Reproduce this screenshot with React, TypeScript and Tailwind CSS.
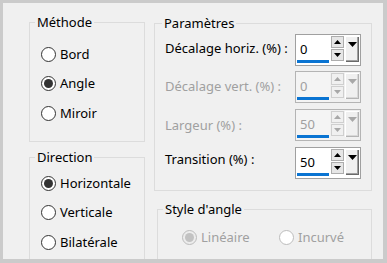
import React from "react";

function Tri({ up, color, w, h }: { up?: boolean; color: string; w: number; h: number }) {
  return (
    <svg width={w} height={h} viewBox={`0 0 ${w} ${h}`} className="block">
      {up ? (
        <polygon points={`0,${h} ${w},${h} ${w / 2},0`} fill={color} />
      ) : (
        <polygon points={`0,0 ${w},0 ${w / 2},${h}`} fill={color} />
      )}
    </svg>
  );
}

function Spinner({ value, disabled }: { value: string; disabled?: boolean }) {
  const tri = disabled ? "#a8a8a8" : "#000000";
  return (
    <div
      className={`w-[66px] h-[32px] shrink-0 border flex ${
        disabled ? "border-[#b4b4b4] bg-[#f0f0f0]" : "border-[#a0a0a0] bg-white"
      }`}
    >
      <div className={`w-[34px] h-full flex flex-col ${disabled ? "bg-[#f4f4f4]" : "bg-white"}`}>
        <div
          className={`flex-1 flex items-center pl-[4px] pt-[2px] leading-[16px] ${
            disabled ? "text-[#a0a0a0]" : "text-black"
          }`}
        >
          {value}
        </div>
        <div className="ml-[1px] w-[32px] h-[3px] bg-[#0a74d2] mb-[2px]" />
      </div>
      <div className="ml-[1px] w-[13px] pt-[1px] flex flex-col">
        <div
          className={`h-[12px] border flex items-center justify-center ${
            disabled ? "border-[#cfcfcf] bg-[#f0f0f0]" : "border-[#adadad] bg-[#e6e6e6]"
          }`}
        >
          <Tri up color={tri} w={7} h={4} />
        </div>
        <div
          className={`mt-[1px] h-[12px] border flex items-center justify-center ${
            disabled ? "border-[#cfcfcf] bg-[#f0f0f0]" : "border-[#adadad] bg-[#e6e6e6]"
          }`}
        >
          <Tri color={tri} w={7} h={4} />
        </div>
      </div>
      <div
        className={`ml-[1px] mt-[1px] w-[14px] h-[26px] bg-[#f0f0f0] flex justify-center pt-[6px] ${
          disabled
            ? "shadow-[inset_1px_1px_#ffffff,inset_-1px_-1px_#b4b4b4,inset_-2px_-2px_#d8d8d8]"
            : "shadow-[inset_1px_1px_#ffffff,inset_-1px_-1px_#696969,inset_-2px_-2px_#a0a0a0]"
        }`}
      >
        <Tri color={tri} w={9} h={5} />
      </div>
    </div>
  );
}

function Radio({
  label,
  checked,
  disabled,
  className,
}: {
  label: string;
  checked?: boolean;
  disabled?: boolean;
  className?: string;
}) {
  return (
    <div className={`flex items-center h-[16px] shrink-0 ${className ?? ""}`}>
      <span
        className={`w-[15px] h-[15px] rounded-full border flex items-center justify-center shrink-0 ${
          disabled
            ? checked
              ? "border-[#bcbcbc] bg-[#ececec]"
              : "border-[#bcbcbc] bg-white"
            : "border-[#333333] bg-white"
        }`}
      >
        {checked && (
          <span
            className={`w-[9px] h-[9px] rounded-full ${disabled ? "bg-[#c2c2c2]" : "bg-[#333333]"}`}
          />
        )}
      </span>
      <span className={`ml-[4px] leading-[16px] ${disabled ? "text-[#a0a0a0]" : "text-black"}`}>
        {label}
      </span>
    </div>
  );
}

function Title({ children, className }: { children: React.ReactNode; className: string }) {
  return (
    <div className={`-mt-[9px] px-[2px] bg-[#f0f0f0] w-fit leading-[16px] text-black shrink-0 ${className}`}>
      {children}
    </div>
  );
}

function Row({
  label,
  value,
  disabled,
  className,
  labelClass,
}: {
  label: string;
  value: string;
  disabled?: boolean;
  className: string;
  labelClass: string;
}) {
  return (
    <div className={`flex items-center h-[32px] shrink-0 pl-[10px] ${className}`}>
      <span
        className={`w-[130px] leading-[16px] ${disabled ? "text-[#a0a0a0]" : "text-black"} ${labelClass}`}
      >
        {label}
      </span>
      <Spinner value={value} disabled={disabled} />
    </div>
  );
}

export default function App() {
  return (
    <div className="w-[387px] h-[263px] bg-[#cbcbcb] pt-[3px] pl-[3px] pr-[4px] pb-[4px] font-['Noto_Sans',sans-serif] text-[13px]">
      <div className="h-full bg-[#f0f0f0] overflow-hidden flex pl-[26px] pt-[19px]">
        <div className="w-[116px] flex flex-col shrink-0">
          <div className="h-[120px] shrink-0 border border-[#dcdcdc] flex flex-col pl-[11px]">
            <Title className="-ml-[6px]">Méthode</Title>
            <Radio label="Bord" className="mt-[16px]" />
            <Radio label="Angle" checked className="mt-[13px]" />
            <Radio label="Miroir" className="mt-[14px]" />
          </div>
          <div className="mt-[15px] h-[120px] shrink-0 border border-[#dcdcdc] flex flex-col pl-[11px]">
            <Title className="-ml-[6px]">Direction</Title>
            <Radio label="Horizontale" checked className="mt-[10px]" />
            <Radio label="Verticale" className="mt-[13px]" />
            <Radio label="Bilatérale" className="mt-[14px]" />
          </div>
        </div>
        <div className="ml-[9px] w-[218px] flex flex-col shrink-0 pt-[1px]">
          <div className="h-[168px] shrink-0 border border-[#dcdcdc] flex flex-col">
            <Title className="ml-[7px]">Paramètres</Title>
            <Row label="Décalage horiz. (%) :" value="0" className="mt-[3px]" labelClass="mb-[4px]" />
            <Row
              label="Décalage vert. (%) :"
              value="0"
              disabled
              className="mt-[5px]"
              labelClass="mb-[2px]"
            />
            <Row label="Largeur (%) :" value="50" disabled className="mt-[6px]" labelClass="mb-0" />
            <Row label="Transition (%) :" value="50" className="mt-[6px]" labelClass="mb-[8px]" />
          </div>
          <div className="ml-[3px] mt-[18px] h-[80px] shrink-0 border border-[#dcdcdc] flex flex-col">
            <Title className="ml-[5px]">Style d'angle</Title>
            <div className="flex pl-[24px] mt-[12px] shrink-0">
              <Radio label="Linéaire" checked disabled className="w-[97px]" />
              <Radio label="Incurvé" disabled />
            </div>
          </div>
        </div>
      </div>
    </div>
  );
}
